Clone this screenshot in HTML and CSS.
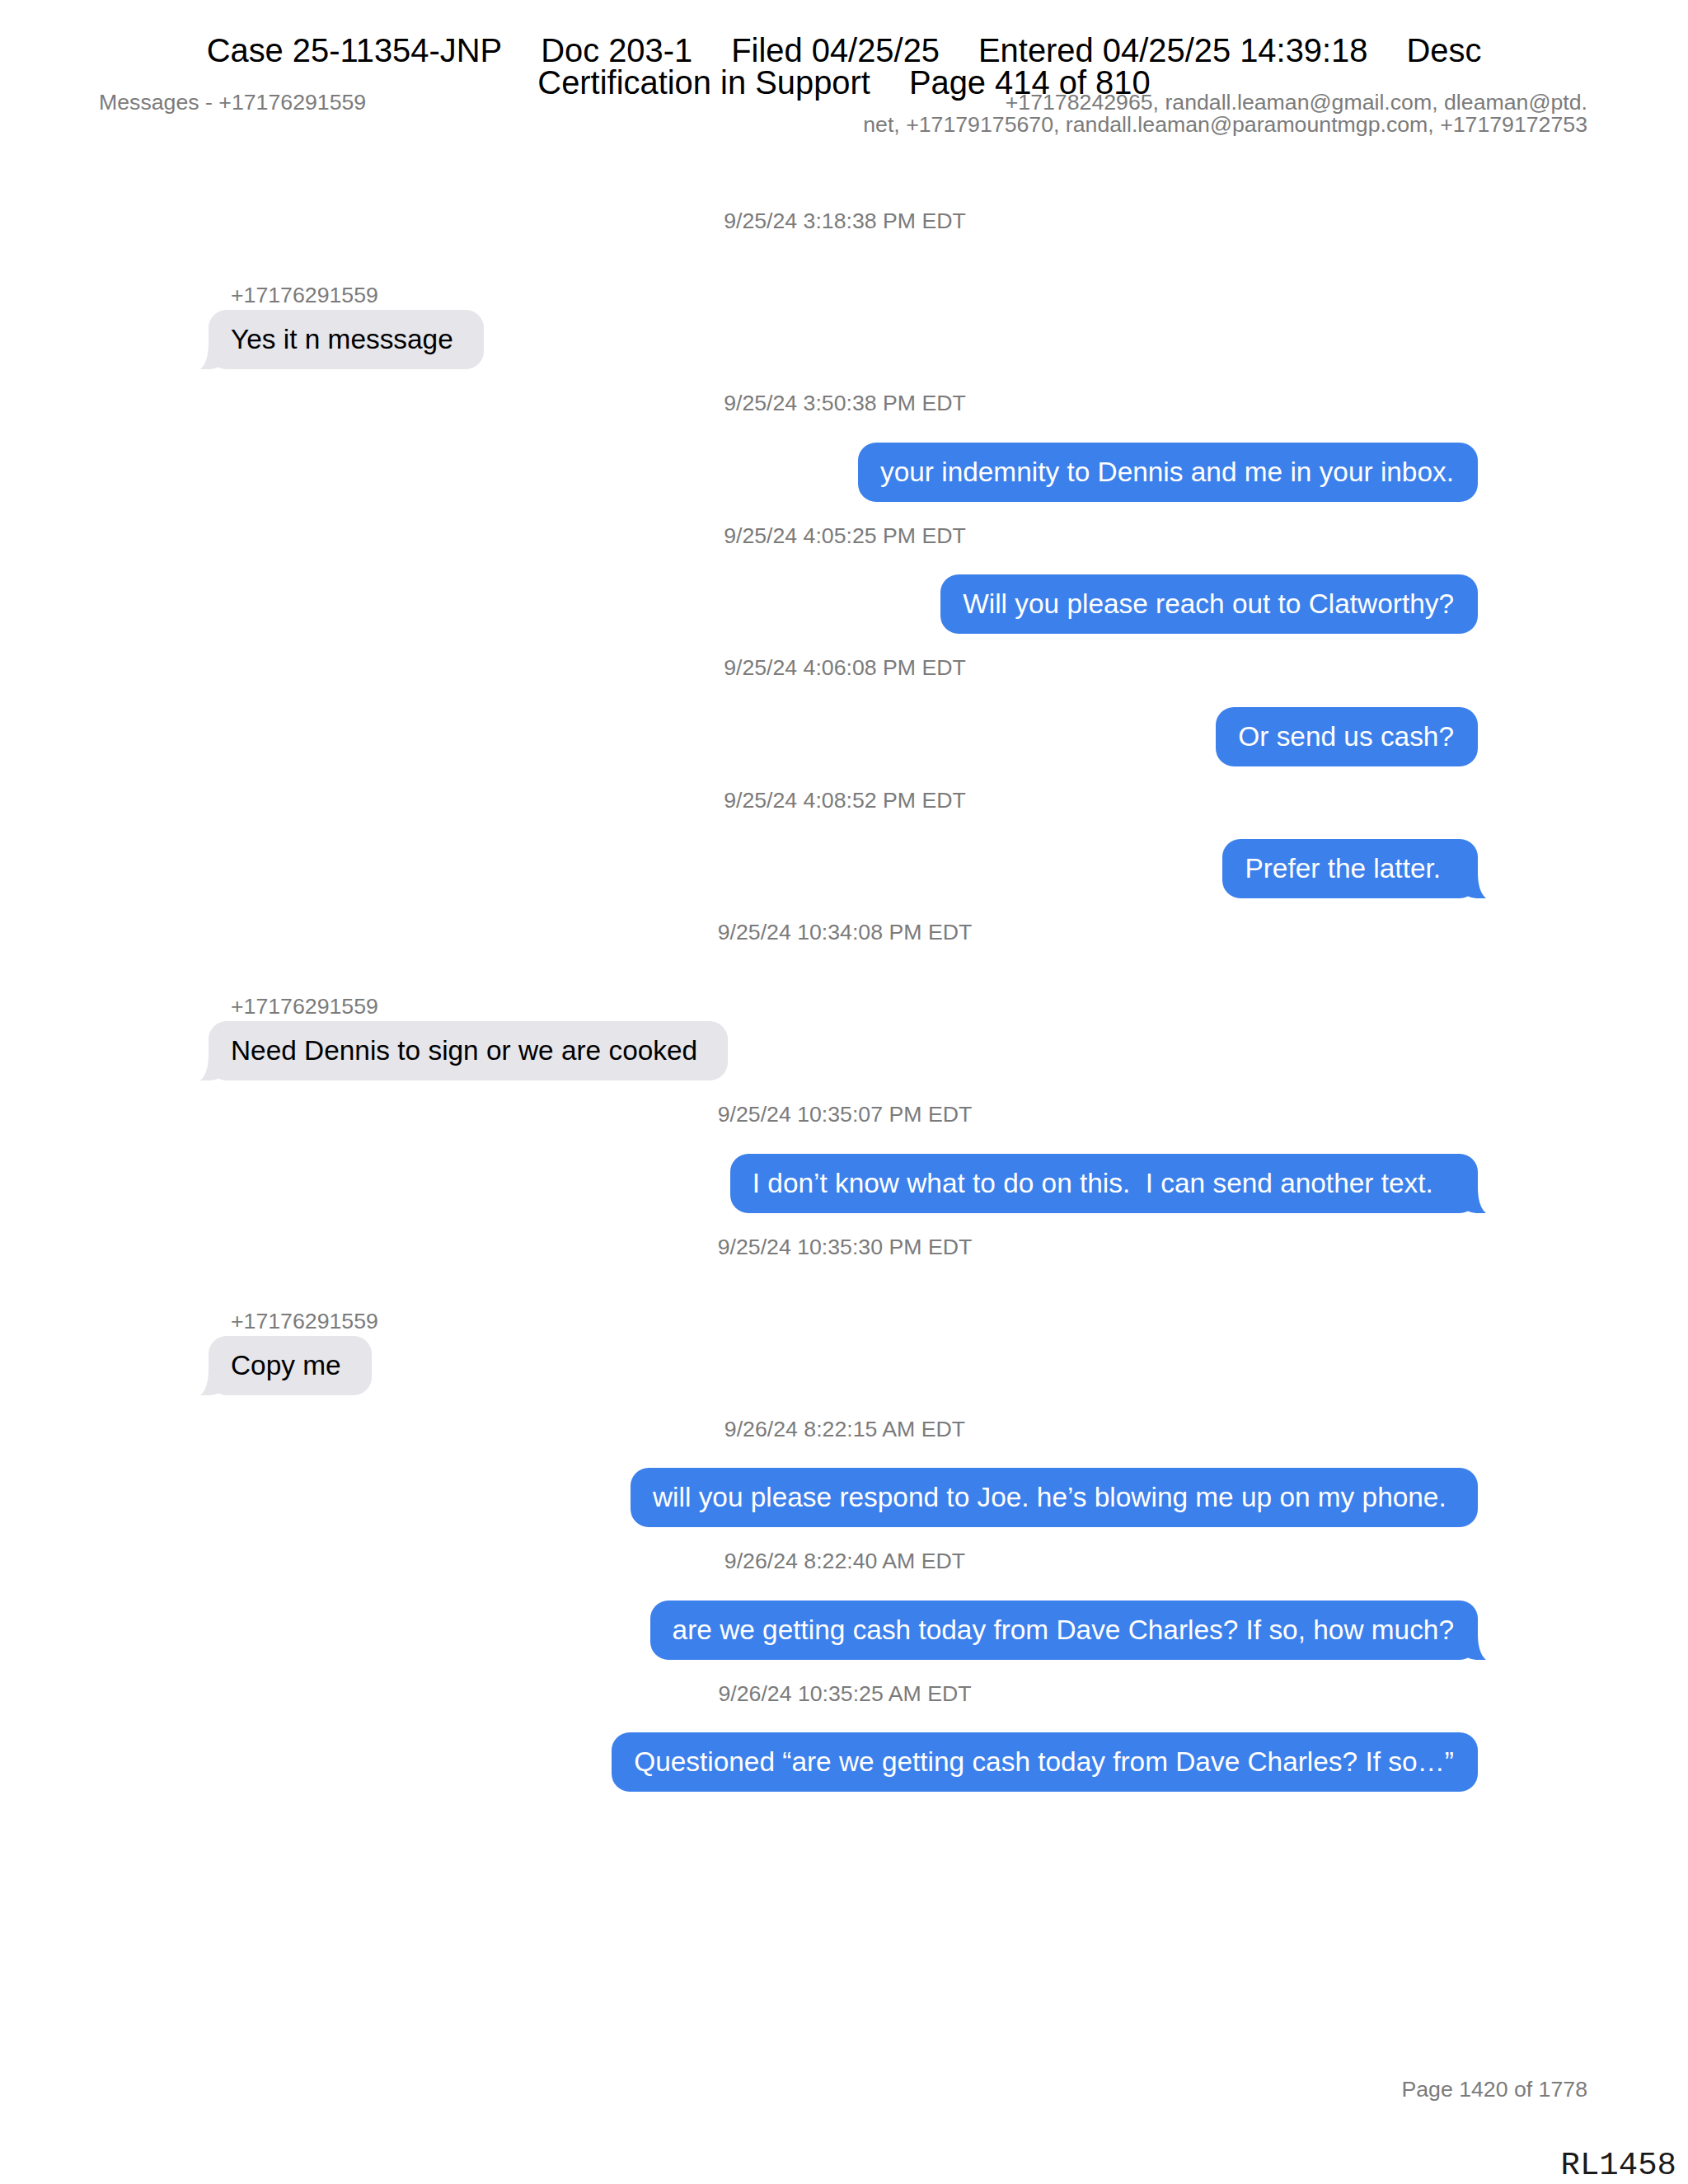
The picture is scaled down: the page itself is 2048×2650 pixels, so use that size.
FILE: index.html
```html
<!DOCTYPE html>
<html lang="en">
<head>
    <meta charset="UTF-8">
    <meta name="viewport" content="width=device-width, initial-scale=1.0">
    <title>Messages - +17176291559</title>
    <link rel="stylesheet" href="styles.css">
</head>
<body>

    <div class="sheet">

        <!-- export header -->
        <header class="meta">
            <div class="meta-title">Messages - +17176291559</div>
            <div class="meta-people">+17178242965, randall.leaman@gmail.com, dleaman@ptd.<br>net, +17179175670, randall.leaman@paramountmgp.com, +17179172753</div>
        </header>

        <!-- conversation -->
        <main class="thread">
            <div class="ts first">9/25/24 3:18:38 PM EDT</div>
            <div class="sender">+17176291559</div>
            <div class="row in"><div class="bubble">Yes it n messsage<svg class="tail" viewBox="-24 0 36 32"><path d="M-24 0H0C0 13 2 25 10 32C3 33-7 32-13 29L-24 22Z"/></svg></div></div>

            <div class="ts">9/25/24 3:50:38 PM EDT</div>
            <div class="row out"><div class="bubble">your indemnity to Dennis and me in your inbox.</div></div>

            <div class="ts">9/25/24 4:05:25 PM EDT</div>
            <div class="row out"><div class="bubble">Will you please reach out to Clatworthy?</div></div>

            <div class="ts">9/25/24 4:06:08 PM EDT</div>
            <div class="row out"><div class="bubble">Or send us cash?</div></div>

            <div class="ts">9/25/24 4:08:52 PM EDT</div>
            <div class="row out"><div class="bubble">Prefer the latter.&nbsp;&#8201;<svg class="tail" viewBox="-24 0 36 32"><path d="M-24 0H0C0 13 2 25 10 32C3 33-7 32-13 29L-24 22Z"/></svg></div></div>

            <div class="ts">9/25/24 10:34:08 PM EDT</div>
            <div class="sender">+17176291559</div>
            <div class="row in"><div class="bubble">Need Dennis to sign or we are cooked<svg class="tail" viewBox="-24 0 36 32"><path d="M-24 0H0C0 13 2 25 10 32C3 33-7 32-13 29L-24 22Z"/></svg></div></div>

            <div class="ts">9/25/24 10:35:07 PM EDT</div>
            <div class="row out"><div class="bubble">I don’t know what to do on this.&nbsp; I can send another text.&nbsp;&nbsp;&#8201;<svg class="tail" viewBox="-24 0 36 32"><path d="M-24 0H0C0 13 2 25 10 32C3 33-7 32-13 29L-24 22Z"/></svg></div></div>

            <div class="ts">9/25/24 10:35:30 PM EDT</div>
            <div class="sender">+17176291559</div>
            <div class="row in"><div class="bubble">Copy me<svg class="tail" viewBox="-24 0 36 32"><path d="M-24 0H0C0 13 2 25 10 32C3 33-7 32-13 29L-24 22Z"/></svg></div></div>

            <div class="ts">9/26/24 8:22:15 AM EDT</div>
            <div class="row out"><div class="bubble">will you please respond to Joe. he’s blowing me up on my phone.&nbsp;</div></div>

            <div class="ts">9/26/24 8:22:40 AM EDT</div>
            <div class="row out"><div class="bubble">are we getting cash today from Dave Charles? If so, how much?<svg class="tail" viewBox="-24 0 36 32"><path d="M-24 0H0C0 13 2 25 10 32C3 33-7 32-13 29L-24 22Z"/></svg></div></div>

            <div class="ts">9/26/24 10:35:25 AM EDT</div>
            <div class="row out"><div class="bubble">Questioned “are we getting cash today from Dave Charles? If so…”</div></div>
        </main>

        <footer class="page-footer">
            <div class="page-count">Page 1420 of 1778</div>
            <div class="bates">RL1458</div>
        </footer>

        <!-- court filing stamp, printed over the page -->
        <div class="stamp">
            <div class="stamp-line">
                <span>Case 25-11354-JNP</span>
                <span>Doc 203-1</span>
                <span>Filed 04/25/25</span>
                <span>Entered 04/25/25 14:39:18</span>
                <span>Desc</span>
            </div>
            <div class="stamp-line">
                <span>Certification in Support</span>
                <span>Page 414 of 810</span>
            </div>
        </div>

    </div>

</body>
</html>
```

FILE: styles.css
```css
body {
    margin: 0;
    background: #fff;
    font-family: 'Liberation Sans', Arial, Helvetica, sans-serif;
    color: #000;
}

.sheet {
    position: relative;
    min-height: 100vh;
    display: flex;
    flex-direction: column;
}

/* stamp */
.stamp {
    position: absolute;
    top: 42px;
    left: 0;
    right: 0;
    z-index: 2;
    font-size: 39.9px;
    line-height: 39px;
    color: #000;
}

.stamp-line {
    display: flex;
    justify-content: center;
    gap: 47px;
    white-space: nowrap;
}

/* header */
.meta {
    display: flex;
    justify-content: space-between;
    align-items: flex-start;
    padding: 111px 122px 0 120px;
    font-size: 26.7px;
    line-height: 27px;
    color: #7b7b7b;
}

.meta-people {
    text-align: right;
}

/* thread */
.thread {
    padding: 0 255px 0 253px;
    margin-top: 88px;
}

.ts {
    margin-top: 26px;
    padding-left: 4px;
    font-size: 26.7px;
    line-height: 30px;
    text-align: center;
    color: #7b7b7b;
}

.ts.first {
    margin-top: 0;
}

.sender {
    margin-top: 60px;
    padding-left: 27px;
    font-size: 26.7px;
    line-height: 30px;
    color: #7b7b7b;
}

.row {
    display: flex;
    margin-top: 32.5px;
}

.sender + .row {
    margin-top: 3px;
}

.row.out {
    justify-content: flex-end;
}

.bubble {
    position: relative;
    padding: 17px 29px 17px 27px;
    border-radius: 22px;
    font-size: 33.4px;
    line-height: 38px;
    white-space: nowrap;
}

.in .bubble {
    background-color: #e5e5ea;
    color: #000;
    padding-right: 37px;
}

.out .bubble {
    background-color: #3c80ec;
    color: #fff;
}

.tail {
    position: absolute;
    bottom: 0;
    width: 36px;
    height: 32px;
}

.out .tail {
    right: -12px;
}

.out .tail path {
    fill: #3c80ec;
}

.in .tail {
    left: -12px;
    transform: scaleX(-1);
}

.in .tail path {
    fill: #e5e5ea;
}

/* footer */
.page-footer {
    margin-top: auto;
}

.page-count {
    padding-right: 122px;
    font-size: 26.7px;
    line-height: 30px;
    text-align: right;
    color: #7b7b7b;
}

.bates {
    margin-top: 56px;
    padding-right: 14px;
    font-family: 'Liberation Mono', 'Courier New', monospace;
    font-size: 39px;
    line-height: 44px;
    text-align: right;
    color: #1a1a1a;
}
```
